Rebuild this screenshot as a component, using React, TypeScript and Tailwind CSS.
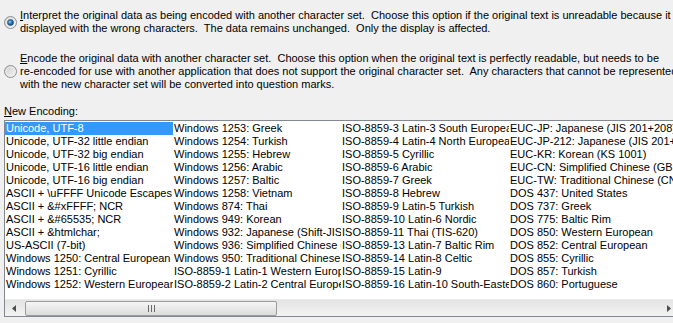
import React from "react";

const col1 = [
  "Unicode, UTF-8",
  "Unicode, UTF-32 little endian",
  "Unicode, UTF-32 big endian",
  "Unicode, UTF-16 little endian",
  "Unicode, UTF-16 big endian",
  "ASCII + \\uFFFF Unicode Escapes",
  "ASCII + &#xFFFF; NCR",
  "ASCII + &#65535; NCR",
  "ASCII + &htmlchar;",
  "US-ASCII (7-bit)",
  "Windows 1250: Central European",
  "Windows 1251: Cyrillic",
  "Windows 1252: Western European",
];
const col2 = [
  "Windows 1253: Greek",
  "Windows 1254: Turkish",
  "Windows 1255: Hebrew",
  "Windows 1256: Arabic",
  "Windows 1257: Baltic",
  "Windows 1258: Vietnam",
  "Windows 874: Thai",
  "Windows 949: Korean",
  "Windows 932: Japanese (Shift-JIS)",
  "Windows 936: Simplified Chinese (GB2312)",
  "Windows 950: Traditional Chinese (Big5)",
  "ISO-8859-1 Latin-1 Western European",
  "ISO-8859-2 Latin-2 Central European",
];
const col3 = [
  "ISO-8859-3 Latin-3 South European",
  "ISO-8859-4 Latin-4 North European",
  "ISO-8859-5 Cyrillic",
  "ISO-8859-6 Arabic",
  "ISO-8859-7 Greek",
  "ISO-8859-8 Hebrew",
  "ISO-8859-9 Latin-5 Turkish",
  "ISO-8859-10 Latin-6 Nordic",
  "ISO-8859-11 Thai (TIS-620)",
  "ISO-8859-13 Latin-7 Baltic Rim",
  "ISO-8859-14 Latin-8 Celtic",
  "ISO-8859-15 Latin-9",
  "ISO-8859-16 Latin-10 South-Eastern European",
];
const col4 = [
  "EUC-JP: Japanese (JIS 201+208)",
  "EUC-JP-212: Japanese (JIS 201+212)",
  "EUC-KR: Korean (KS 1001)",
  "EUC-CN: Simplified Chinese (GB 2312)",
  "EUC-TW: Traditional Chinese (CNS)",
  "DOS 437: United States",
  "DOS 737: Greek",
  "DOS 775: Baltic Rim",
  "DOS 850: Western European",
  "DOS 852: Central European",
  "DOS 855: Cyrillic",
  "DOS 857: Turkish",
  "DOS 860: Portuguese",
];

function Radio({ checked }: { checked: boolean }) {
  return (
    <svg width="13" height="13" viewBox="0 0 13 13" className="shrink-0">
      <defs>
        <linearGradient id={checked ? "rbg1" : "rbg2"} x1="0" y1="0" x2="1" y2="1">
          <stop offset="0" stopColor="#cbcbcb" />
          <stop offset="1" stopColor="#f7f7f7" />
        </linearGradient>
        <radialGradient id="dot" cx="0.4" cy="0.4" r="0.6">
          <stop offset="0" stopColor="#9fd4f6" />
          <stop offset="0.5" stopColor="#2e7ac0" />
          <stop offset="1" stopColor="#17426c" />
        </radialGradient>
      </defs>
      <circle cx="6.5" cy="6.5" r="6" fill={checked ? "url(#rbg1)" : "url(#rbg2)"} stroke="#8f8f8f" strokeWidth="1" />
      <circle cx="6.5" cy="6.5" r="4.5" fill="none" stroke="#f4f4f4" strokeWidth="1" opacity="0.7" />
      {checked && <circle cx="6.5" cy="6.5" r="3" fill="url(#dot)" stroke="#1c4f80" strokeWidth="0.6" />}
    </svg>
  );
}

function Arrow({ dir }: { dir: "left" | "right" }) {
  return (
    <svg width="4" height="7" viewBox="0 0 4 7">
      {dir === "left" ? <path d="M4 0 L0 3.5 L4 7 Z" fill="#4d4d4d" /> : <path d="M0 0 L4 3.5 L0 7 Z" fill="#4d4d4d" />}
    </svg>
  );
}

export default function App() {
  return (
    <div className="w-[673px] h-[323px] overflow-hidden bg-[#f0f0f0] text-black font-['Liberation_Sans',Arial,sans-serif] text-[11px] leading-[13px]">
      <div className="flex items-center pt-[9px] pl-[4px] gap-[3px]">
        <Radio checked={true} />
        <div className="whitespace-pre">
          <div>
            <span className="underline">I</span>
            {"nterpret the original data as being encoded with another character set.  Choose this option if the original text is unreadable because it is"}
          </div>
          <div>{"displayed with the wrong characters.  The data remains unchanged.  Only the display is affected."}</div>
        </div>
      </div>
      <div className="flex items-center mt-[17px] pl-[4px] gap-[3px]">
        <Radio checked={false} />
        <div className="whitespace-pre">
          <div>
            <span className="underline">E</span>
            {"ncode the original data with another character set.  Choose this option when the original text is perfectly readable, but needs to be"}
          </div>
          <div>{"re-encoded for use with another application that does not support the original character set.  Any characters that cannot be represented"}</div>
          <div>{"with the new character set will be converted into question marks."}</div>
        </div>
      </div>
      <div className="mt-[14px] pl-[4px]">
        <span className="underline">N</span>ew Encoding:
      </div>
      <div className="ml-[4px] mt-[2px] w-[674px] h-[197px] border border-[#828790] bg-white flex flex-col">
        <div className="pt-[1px] flex flex-col">
          {col1.map((c, i) => (
            <div key={i} className="flex h-[13px]">
              <div className={"w-[168px] shrink-0 overflow-hidden whitespace-nowrap pl-[1px] " + (i === 0 ? "bg-[#3399ff] text-white" : "")}>{c}</div>
              <div className="w-[168px] shrink-0 overflow-hidden whitespace-nowrap pl-[1px]">{col2[i]}</div>
              <div className="w-[168px] shrink-0 overflow-hidden whitespace-nowrap pl-[1px]">{col3[i]}</div>
              <div className="w-[168px] shrink-0 overflow-hidden whitespace-nowrap pl-[1px]">{col4[i]}</div>
            </div>
          ))}
        </div>
        <div className="flex-1" />
        <div className="h-[17px] flex bg-gradient-to-b from-[#e3e3e3] to-[#f3f3f3] border-t border-[#ececec]">
          <div className="w-[17px] flex items-center justify-center">
            <Arrow dir="left" />
          </div>
          <div className="flex-1 flex items-center pl-[3px] pr-[3px]">
            <div className="w-[252px] h-[15px] rounded-[2px] border border-[#9b9b9b] bg-gradient-to-b from-[#f5f5f5] to-[#dcdcdc] flex items-center justify-center gap-[2px]">
              <div className="w-[1px] h-[7px] bg-[#6a6a6a]" />
              <div className="w-[1px] h-[7px] bg-[#6a6a6a]" />
              <div className="w-[1px] h-[7px] bg-[#6a6a6a]" />
            </div>
          </div>
          <div className="w-[17px] flex items-center justify-center">
            <Arrow dir="right" />
          </div>
        </div>
      </div>
    </div>
  );
}
